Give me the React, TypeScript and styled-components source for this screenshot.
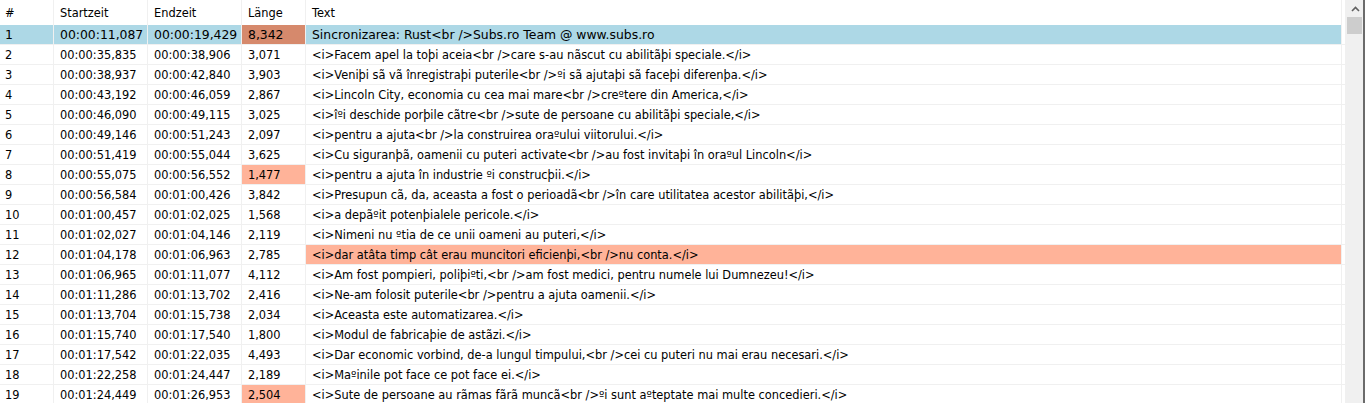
import React from "react";
import styled, { createGlobalStyle } from "styled-components";

const Global = createGlobalStyle`
  html, body { margin: 0; padding: 0; background: #fff; }
  body { font-family: "DejaVu Sans", Verdana, sans-serif; overflow: hidden; }
`;

type Row = [string, string, string, string, string];

const rows: Row[] = [
  ["1", "00:00:11,087", "00:00:19,429", "8,342", "Sincronizarea: Rust<br />Subs.ro Team @ www.subs.ro"],
  ["2", "00:00:35,835", "00:00:38,906", "3,071", "<i>Facem apel la toþi aceia<br />care s-au nãscut cu abilitãþi speciale.</i>"],
  ["3", "00:00:38,937", "00:00:42,840", "3,903", "<i>Veniþi sã vã înregistraþi puterile<br />ºi sã ajutaþi sã faceþi diferenþa.</i>"],
  ["4", "00:00:43,192", "00:00:46,059", "2,867", "<i>Lincoln City, economia cu cea mai mare<br />creºtere din America,</i>"],
  ["5", "00:00:46,090", "00:00:49,115", "3,025", "<i>îºi deschide porþile cãtre<br />sute de persoane cu abilitãþi speciale,</i>"],
  ["6", "00:00:49,146", "00:00:51,243", "2,097", "<i>pentru a ajuta<br />la construirea oraºului viitorului.</i>"],
  ["7", "00:00:51,419", "00:00:55,044", "3,625", "<i>Cu siguranþã, oamenii cu puteri activate<br />au fost invitaþi în oraºul Lincoln</i>"],
  ["8", "00:00:55,075", "00:00:56,552", "1,477", "<i>pentru a ajuta în industrie ºi construcþii.</i>"],
  ["9", "00:00:56,584", "00:01:00,426", "3,842", "<i>Presupun cã, da, aceasta a fost o perioadã<br />în care utilitatea acestor abilitãþi,</i>"],
  ["10", "00:01:00,457", "00:01:02,025", "1,568", "<i>a depãºit potenþialele pericole.</i>"],
  ["11", "00:01:02,027", "00:01:04,146", "2,119", "<i>Nimeni nu ºtia de ce unii oameni au puteri,</i>"],
  ["12", "00:01:04,178", "00:01:06,963", "2,785", "<i>dar atâta timp cât erau muncitori eficienþi,<br />nu conta.</i>"],
  ["13", "00:01:06,965", "00:01:11,077", "4,112", "<i>Am fost pompieri, poliþiºti,<br />am fost medici, pentru numele lui Dumnezeu!</i>"],
  ["14", "00:01:11,286", "00:01:13,702", "2,416", "<i>Ne-am folosit puterile<br />pentru a ajuta oamenii.</i>"],
  ["15", "00:01:13,704", "00:01:15,738", "2,034", "<i>Aceasta este automatizarea.</i>"],
  ["16", "00:01:15,740", "00:01:17,540", "1,800", "<i>Modul de fabricaþie de astãzi.</i>"],
  ["17", "00:01:17,542", "00:01:22,035", "4,493", "<i>Dar economic vorbind, de-a lungul timpului,<br />cei cu puteri nu mai erau necesari.</i>"],
  ["18", "00:01:22,258", "00:01:24,447", "2,189", "<i>Maºinile pot face ce pot face ei.</i>"],
  ["19", "00:01:24,449", "00:01:26,953", "2,504", "<i>Sute de persoane au rãmas fãrã muncã<br />ºi sunt aºteptate mai multe concedieri.</i>"],
];

const shortRows = new Set(["8", "19"]);
const warnText = new Set(["12"]);

const Frame = styled.div`
  display: flex;
  width: 1365px;
  height: 403px;
  box-sizing: border-box;
  border-right: 2px solid #6b6b6b;
  overflow: hidden;
`;

const Grid = styled.div`
  flex: 0 0 1346px;
  display: flex;
  flex-direction: column;
  overflow: hidden;
`;

const Line = styled.div<{ $header?: boolean; $selected?: boolean }>`
  display: grid;
  grid-template-columns: 54px 94px 94px 64px 1036px 4px;
  height: ${(p) => (p.$header ? 25 : 20)}px;
  flex: 0 0 auto;
  box-sizing: border-box;
  border-bottom: ${(p) => (p.$header ? "none" : "1px solid #f0f0f0")};
  font-size: ${(p) => (p.$selected ? "12.4px" : "11.4px")};
  color: #000;
`;

const Cell = styled.div<{ $bg?: string; $first?: boolean }>`
  display: flex;
  align-items: center;
  padding-left: ${(p) => (p.$first ? 5 : 6)}px;
  white-space: nowrap;
  overflow: hidden;
  background: ${(p) => p.$bg || "transparent"};
  border-right: 1px solid #f0f0f0;
  box-sizing: border-box;
`;

const HeadCell = styled(Cell)`
  padding-top: 1px;
  font-size: 11.4px;
`;

const Tail = styled.div`
  border-right: 1px solid #f0f0f0;
`;

const Scroll = styled.div`
  flex: 0 0 17px;
  background: #f0f0f0;
  display: flex;
  flex-direction: column;
  align-items: stretch;
  padding-left: 1px;
  box-sizing: border-box;
`;

const Arrow = styled.div`
  height: 17px;
  display: flex;
  align-items: center;
  justify-content: center;
`;

const Thumb = styled.div`
  height: 17px;
  background: #cdcdcd;
  margin-right: 1px;
`;

const BLUE = "#add8e6";
const SALMON = "#ffb399";
const SALMON_DARK = "#d6896c";

export default function App() {
  return (
    <>
      <Global />
      <Frame>
        <Grid>
          <Line $header>
            <HeadCell $first>#</HeadCell>
            <HeadCell>Startzeit</HeadCell>
            <HeadCell>Endzeit</HeadCell>
            <HeadCell>Länge</HeadCell>
            <HeadCell>Text</HeadCell>
            <Tail />
          </Line>
          {rows.map((r) => {
            const sel = r[0] === "1";
            const bg = sel ? BLUE : undefined;
            const lenBg = sel ? SALMON_DARK : shortRows.has(r[0]) ? SALMON : undefined;
            const textBg = warnText.has(r[0]) ? SALMON : bg;
            return (
              <Line key={r[0]} $selected={sel}>
                <Cell $first $bg={bg}>{r[0]}</Cell>
                <Cell $bg={bg}>{r[1]}</Cell>
                <Cell $bg={bg}>{r[2]}</Cell>
                <Cell $bg={lenBg}>{r[3]}</Cell>
                <Cell $bg={textBg}>{r[4]}</Cell>
                <Tail />
              </Line>
            );
          })}
        </Grid>
        <Scroll>
          <Arrow>
            <svg width="9" height="6" viewBox="0 0 9 6">
              <path d="M1 5 L4.5 1.5 L8 5" fill="none" stroke="#606060" strokeWidth="1.6" />
            </svg>
          </Arrow>
          <Thumb />
        </Scroll>
      </Frame>
    </>
  );
}
